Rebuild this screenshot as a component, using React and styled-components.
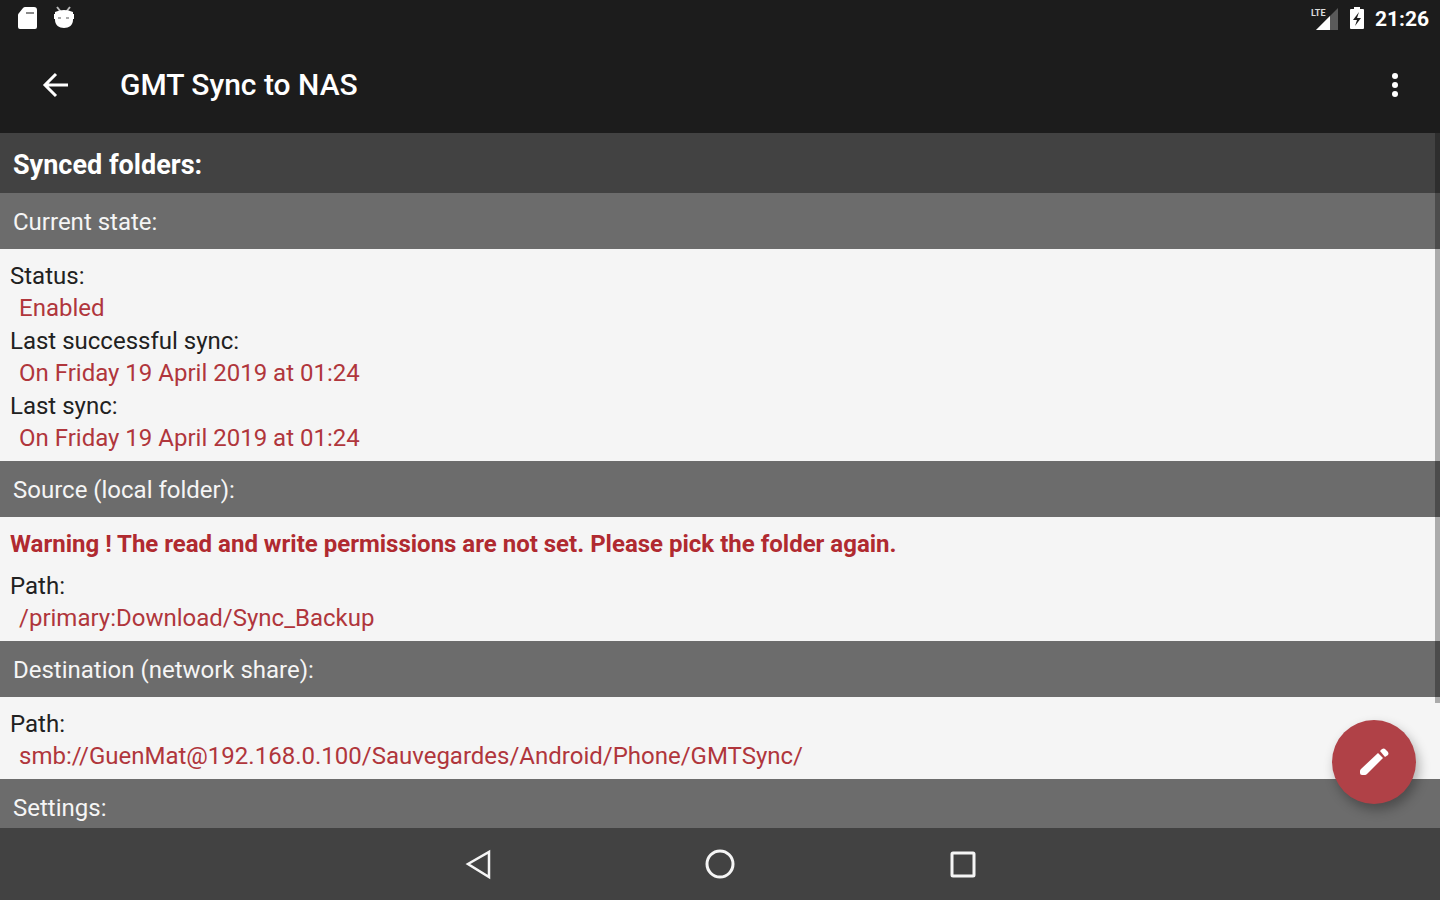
import React from "react";
import styled, { createGlobalStyle } from "styled-components";

const GlobalStyle = createGlobalStyle`
  * {
    box-sizing: border-box;
  }
  body {
    margin: 0;
    background-color: #f5f5f5;
    font-family: Roboto, "Liberation Sans", sans-serif;
  }
  h1, h2, h3, p, dl, dd {
    margin: 0;
  }
`;

const Screen = styled.div`
  display: flex;
  flex-direction: column;
  height: 100vh;
  overflow: hidden;
`;

// status bar
const StatusBar = styled.div`
  display: flex;
  justify-content: space-between;
  align-items: center;
  height: 38px;
  flex-shrink: 0;
  padding: 0 11px 0 16px;
  background-color: #1c1c1c;
  color: #fff;
`;

const StatusGroup = styled.div`
  display: flex;
  align-items: center;
  gap: ${({ $gap }) => $gap}px;
`;

const Clock = styled.time`
  font-size: 21px;
  font-weight: 700;
  line-height: 38px;
`;

// app bar
const AppBar = styled.header`
  display: flex;
  align-items: center;
  height: 95px;
  flex-shrink: 0;
  padding: 0 25px 2px 35px;
  background-color: #1c1c1c;
`;

const IconButton = styled.button`
  display: flex;
  align-items: center;
  justify-content: center;
  width: 40px;
  height: 40px;
  padding: 0;
  border: none;
  background: none;
  color: #fff;
  cursor: pointer;
`;

const Title = styled.h1`
  flex: 1;
  padding-left: 45px;
  font-size: 30px;
  font-weight: 500;
  line-height: 38px;
  color: #fff;
`;

// content
const Content = styled.main`
  position: relative;
  flex: 1;
  min-height: 0;
  overflow: hidden;
`;

const Banner = styled.h2`
  height: 60px;
  padding: 0 13px;
  background-color: #424242;
  font-size: 27px;
  font-weight: 700;
  line-height: 64px;
  color: #fff;
`;

const SectionTitle = styled.h3`
  height: 56px;
  padding: 0 13px;
  background-color: #6c6c6c;
  font-size: 24px;
  font-weight: 400;
  line-height: 59px;
  color: #f5f5f5;
`;

const SectionBody = styled.div`
  padding: 11px 10px 7px;
  font-size: 24px;
  line-height: 32px;
  color: #212121;
`;

const Warning = styled.p`
  margin-bottom: 10px;
  font-weight: 700;
  color: #b02a30;
`;

const Fields = styled.dl`
  display: flex;
  flex-direction: column;
  gap: 1px;
`;

const Value = styled.dd`
  padding-left: 9px;
  color: #b0363c;
`;

const ScrollThumb = styled.div`
  position: absolute;
  top: 0;
  right: 0;
  width: 5px;
  height: 82%;
  background-color: rgba(0, 0, 0, 0.3);
`;

const Fab = styled.button`
  position: absolute;
  right: 24px;
  bottom: 24px;
  display: flex;
  align-items: center;
  justify-content: center;
  width: 84px;
  height: 84px;
  padding: 0;
  border: none;
  border-radius: 50%;
  background-color: #b04147;
  box-shadow: 3px 6px 12px rgba(0, 0, 0, 0.3);
  color: #fff;
  cursor: pointer;
`;

// navigation bar
const NavBar = styled.nav`
  display: flex;
  justify-content: center;
  align-items: center;
  gap: 203px;
  height: 72px;
  flex-shrink: 0;
  background-color: #424242;
`;

const SdCardIcon = () => (
  <svg width="24" height="26" viewBox="0 0 24 26" aria-hidden="true">
    <path d="M9 1h9a3 3 0 0 1 3 3v17a2 2 0 0 1-2 2H4a2 2 0 0 1-2-2V9q0-1 1-2l4-5q1-1 2-1z" fill="#fff" />
    <path d="M10 7h8" stroke="#8a8a8a" strokeWidth="2" />
  </svg>
);

const DebugIcon = () => (
  <svg width="24" height="26" viewBox="0 0 24 26" aria-hidden="true">
    <path d="M5 1l4 5M18 1l-4 5" stroke="#bbb" strokeWidth="2" />
    <path d="M3 6q9-4 18 0v8c0 5-4 8-9 8s-9-3-9-8z" fill="#fff" />
    <path d="M2 8h20v5H2z" fill="#fff" />
    <path d="M6 12h3M14 12h3" stroke="#aaa" strokeWidth="2" />
  </svg>
);

const SignalIcon = () => (
  <svg width="28" height="26" viewBox="0 0 28 26" aria-hidden="true">
    <path d="M27 2v22H5z" fill="#5a5a5a" />
    <path d="M19 10v14H5z" fill="#fff" />
    <text x="0" y="10" fontSize="9" fontWeight="700" fill="#ddd">
      LTE
    </text>
  </svg>
);

const BatteryIcon = () => (
  <svg width="16" height="26" viewBox="0 0 16 26" aria-hidden="true">
    <path d="M5 1h6v2h3q1 0 1 1v18q0 1-1 1H2q-1 0-1-1V4q0-1 1-1h3z" fill="#fff" />
    <path d="M10 6l-6 8h4l-2 6 6-8H8z" fill="#1c1c1c" />
  </svg>
);

const BackIcon = () => (
  <svg width="28" height="28" viewBox="0 0 28 28" fill="none" stroke="currentColor" strokeWidth="3">
    <path d="M27 14H4M15 3L4 14l11 11" />
  </svg>
);

const MoreIcon = () => (
  <svg width="8" height="28" viewBox="0 0 8 28" fill="currentColor">
    <circle cx="4" cy="5" r="3" />
    <circle cx="4" cy="14" r="3" />
    <circle cx="4" cy="23" r="3" />
  </svg>
);

const PencilIcon = () => (
  <svg width="36" height="36" viewBox="0 0 36 36" fill="currentColor">
    <path d="M22 9l5 5L11 30q-1 1-2 1H6q-2 0-2-2v-2q0-1 1-2z" />
    <path d="M24 7l2-2q2-1 3 0l3 3q1 2 0 3l-3 2z" />
  </svg>
);

const NavIcon = ({ children }) => (
  <svg width="32" height="32" viewBox="0 0 32 32" fill="none" stroke="#f5f5f5" strokeWidth="3">
    {children}
  </svg>
);

const Section = ({ title, warning, fields = [] }) => (
  <section>
    <SectionTitle>{title}</SectionTitle>
    <SectionBody>
      {warning && <Warning>{warning}</Warning>}
      <Fields>
        {fields.map(([label, value]) => (
          <div key={label}>
            <dt>{label}</dt>
            <Value>{value}</Value>
          </div>
        ))}
      </Fields>
    </SectionBody>
  </section>
);

const sections = [
  {
    title: "Current state:",
    fields: [
      ["Status:", "Enabled"],
      ["Last successful sync:", "On Friday 19 April 2019 at 01:24"],
      ["Last sync:", "On Friday 19 April 2019 at 01:24"],
    ],
  },
  {
    title: "Source (local folder):",
    warning: "Warning ! The read and write permissions are not set. Please pick the folder again.",
    fields: [["Path:", "/primary:Download/Sync_Backup"]],
  },
  {
    title: "Destination (network share):",
    fields: [["Path:", "smb://GuenMat@192.168.0.100/Sauvegardes/Android/Phone/GMTSync/"]],
  },
  { title: "Settings:" },
];

const App = () => {
  return (
    <Screen>
      <GlobalStyle />
      <StatusBar>
        <StatusGroup $gap={12}>
          <SdCardIcon />
          <DebugIcon />
        </StatusGroup>
        <StatusGroup $gap={10}>
          <SignalIcon />
          <BatteryIcon />
          <Clock>21:26</Clock>
        </StatusGroup>
      </StatusBar>
      <AppBar>
        <IconButton aria-label="Back">
          <BackIcon />
        </IconButton>
        <Title>GMT Sync to NAS</Title>
        <IconButton aria-label="More options">
          <MoreIcon />
        </IconButton>
      </AppBar>
      <Content>
        <Banner>Synced folders:</Banner>
        {sections.map((section) => (
          <Section key={section.title} {...section} />
        ))}
        <ScrollThumb />
        <Fab aria-label="Edit">
          <PencilIcon />
        </Fab>
      </Content>
      <NavBar>
        <IconButton aria-label="Navigate back">
          <NavIcon>
            <path d="M28 4v25L7 16z" strokeWidth="2.5" />
          </NavIcon>
        </IconButton>
        <IconButton aria-label="Home">
          <NavIcon>
            <circle cx="16" cy="16" r="13" />
          </NavIcon>
        </IconButton>
        <IconButton aria-label="Recent apps">
          <NavIcon>
            <rect x="5" y="5" width="22" height="23" rx="1" />
          </NavIcon>
        </IconButton>
      </NavBar>
    </Screen>
  );
};

export default App;
